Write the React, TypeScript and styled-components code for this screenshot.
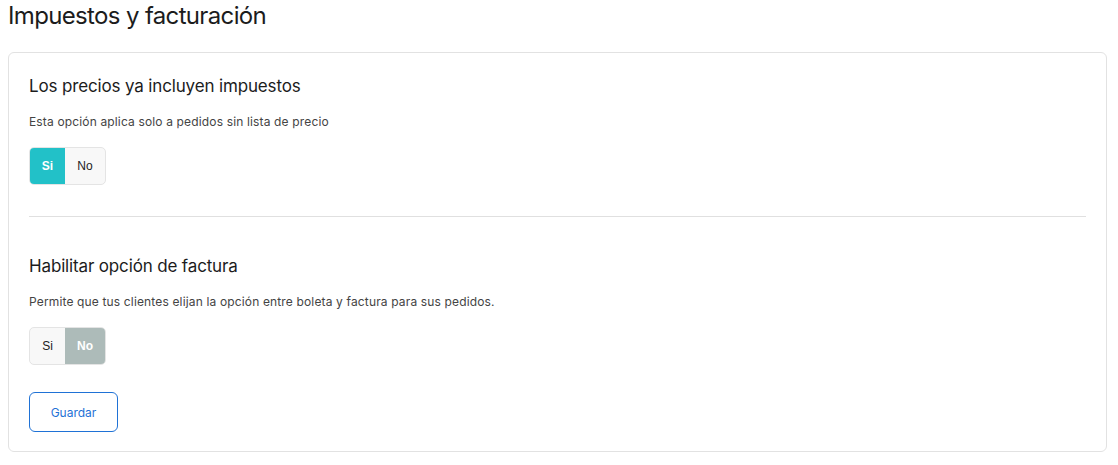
import React, { useState } from "react";
import styled, { createGlobalStyle } from "styled-components";

const Global = createGlobalStyle`
  html, body { margin: 0; padding: 0; background: #ffffff; }
  body { font-family: Inter, "Noto Sans", sans-serif; color: #1f1f1f; }
  * { box-sizing: border-box; }
`;

const Page = styled.div`
  padding: 0 11px 0 8px;
`;

const Title = styled.h1`
  margin: 0;
  padding-top: 1px;
  font-size: 24px;
  line-height: 30px;
  font-weight: 400;
  letter-spacing: -0.65px;
  color: #1c1c1c;
`;

const Card = styled.div`
  margin-top: 21px;
  border: 1px solid #e2e2e2;
  border-radius: 6px;
  padding: 21px 20px 19px 20px;
  display: flex;
  flex-direction: column;
`;

const Section = styled.div`
  display: flex;
  flex-direction: column;
  align-items: flex-start;
`;

const Heading = styled.h2`
  margin: 0;
  font-size: 17px;
  line-height: 24px;
  font-weight: 400;
  letter-spacing: -0.15px;
  color: #1c1c1c;
`;

const Desc = styled.p`
  margin: 16px 0 0 0;
  font-size: 12px;
  line-height: 16px;
  letter-spacing: 0.15px;
  color: #444444;
`;

const Toggle = styled.div`
  margin-top: 17px;
  display: flex;
  height: 38px;
  border: 1px solid #e4e4e4;
  border-radius: 5px;
  overflow: hidden;
  background: #f8f8f8;
`;

const Seg = styled.button<{ $active: boolean; $tone: string; $w: number }>`
  width: ${(p) => p.$w}px;
  border: none;
  margin: 0;
  padding: 0;
  font-family: "Liberation Sans", Arial, sans-serif;
  font-size: 12px;
  font-weight: ${(p) => (p.$active ? 700 : 400)};
  color: ${(p) => (p.$active ? "#ffffff" : "#222222")};
  background: ${(p) => (p.$active ? p.$tone : "transparent")};
  cursor: pointer;
`;

const Divider = styled.hr`
  width: 100%;
  margin: 31px 0 37px 0;
  border: none;
  border-top: 1px solid #e0e0e0;
`;

const SaveButton = styled.button`
  margin-top: 27px;
  width: 89px;
  height: 40px;
  border: 1px solid #1f72d6;
  border-radius: 6px;
  background: #ffffff;
  color: #1f72d6;
  font-family: Inter, "Noto Sans", sans-serif;
  font-size: 12px;
  cursor: pointer;
`;

function YesNo({ value, onChange, tone }: { value: boolean; onChange: (v: boolean) => void; tone: string }) {
  return (
    <Toggle>
      <Seg $w={35} $active={value} $tone={tone} onClick={() => onChange(true)}>
        Si
      </Seg>
      <Seg $w={40} $active={!value} $tone={tone} onClick={() => onChange(false)}>
        No
      </Seg>
    </Toggle>
  );
}

export default function App() {
  const [taxIncluded, setTaxIncluded] = useState(true);
  const [invoice, setInvoice] = useState(false);
  return (
    <Page>
      <Global />
      <Title>Impuestos y facturación</Title>
      <Card>
        <Section>
          <Heading>Los precios ya incluyen impuestos</Heading>
          <Desc>Esta opción aplica solo a pedidos sin lista de precio</Desc>
          <YesNo value={taxIncluded} onChange={setTaxIncluded} tone="#22c1c8" />
        </Section>
        <Divider />
        <Section>
          <Heading>Habilitar opción de factura</Heading>
          <Desc>Permite que tus clientes elijan la opción entre boleta y factura para sus pedidos.</Desc>
          <YesNo value={invoice} onChange={setInvoice} tone="#adbbb9" />
          <SaveButton>Guardar</SaveButton>
        </Section>
      </Card>
    </Page>
  );
}
